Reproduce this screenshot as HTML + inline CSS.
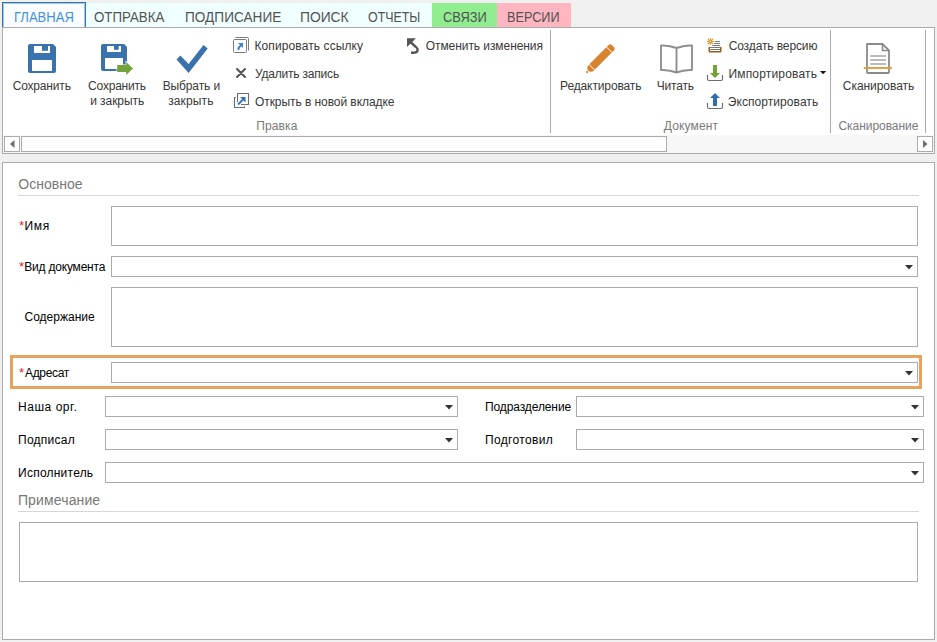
<!DOCTYPE html>
<html><head><meta charset="utf-8"><style>
html,body{margin:0;padding:0;width:937px;height:642px;overflow:hidden;background:#f0f0f0}
.a{position:absolute}
.t{position:absolute;white-space:nowrap;line-height:1;font-family:"Liberation Sans", sans-serif}
</style></head><body>
<div class="a" style="left:0px;top:0px;width:937px;height:642px;box-sizing:border-box;background:#f0f0f0"></div>
<div class="a" style="left:2px;top:3px;width:430px;height:24px;box-sizing:border-box;background:#f0ffff"></div>
<div class="a" style="left:432px;top:3px;width:65px;height:24px;box-sizing:border-box;background:#90ee90"></div>
<div class="a" style="left:497px;top:3px;width:74px;height:24px;box-sizing:border-box;background:#ffb6c1"></div>
<div class="a" style="left:2px;top:2px;width:84px;height:26px;box-sizing:border-box;background:#fafdff;border:1px solid #1e78c8;border-bottom:none;box-shadow:inset 1px 1px 0 #b8c4cc, inset -1px 0 0 #b8c4cc"></div>
<div class="a" style="left:2px;top:27px;width:933px;height:127px;box-sizing:border-box;background:#fff;border:1px solid #ababab"></div>
<div class="a" style="left:86px;top:27px;width:849px;height:1px;box-sizing:border-box;background:#a9abad"></div>
<div class="a" style="left:3px;top:135px;width:931px;height:18px;box-sizing:border-box;background:#f7f7f7"></div>
<div class="a" style="left:4px;top:136px;width:16px;height:16px;box-sizing:border-box;background:#fff;border:1px solid #ababab"></div>
<div class="a" style="left:21px;top:136px;width:646px;height:16px;box-sizing:border-box;background:#fff;border:1px solid #ababab"></div>
<div class="a" style="left:917px;top:136px;width:16px;height:16px;box-sizing:border-box;background:#fff;border:1px solid #ababab"></div>
<svg class="a" style="left:10px;top:140px" width="6" height="8"><path d="M4.5 0 L4.5 8 L0 4 Z" fill="#6e6e6e"/></svg>
<svg class="a" style="left:923px;top:140px" width="6" height="8"><path d="M0 0 L0 8 L4.5 4 Z" fill="#6e6e6e"/></svg>
<div class="a" style="left:550px;top:30px;width:1px;height:103px;box-sizing:border-box;background:#ababab"></div>
<div class="a" style="left:830px;top:30px;width:1px;height:103px;box-sizing:border-box;background:#ababab"></div>
<div class="a" style="left:925px;top:30px;width:1px;height:103px;box-sizing:border-box;background:#ababab"></div>
<div class="t" style="left:14.38px;top:10.15px;font-size:14px;color:#4592dc;letter-spacing:0.000px;transform:scaleX(0.9314);transform-origin:0 0;">ГЛАВНАЯ</div>
<div class="t" style="left:94.38px;top:10.15px;font-size:14px;color:#525252;letter-spacing:0.000px;transform:scaleX(0.9495);transform-origin:0 0;">ОТПРАВКА</div>
<div class="t" style="left:184.55px;top:10.15px;font-size:14px;color:#525252;letter-spacing:0.000px;transform:scaleX(0.9741);transform-origin:0 0;">ПОДПИСАНИЕ</div>
<div class="t" style="left:299.92px;top:10.15px;font-size:14px;color:#525252;letter-spacing:0.000px;transform:scaleX(0.9871);transform-origin:0 0;">ПОИСК</div>
<div class="t" style="left:368.45px;top:10.15px;font-size:14px;color:#525252;letter-spacing:0.000px;transform:scaleX(0.8844);transform-origin:0 0;">ОТЧЕТЫ</div>
<div class="t" style="left:442.65px;top:10.15px;font-size:14px;color:#525252;letter-spacing:0.000px;transform:scaleX(0.9175);transform-origin:0 0;">СВЯЗИ</div>
<div class="t" style="left:507.02px;top:10.15px;font-size:14px;color:#525252;letter-spacing:0.000px;transform:scaleX(0.9049);transform-origin:0 0;">ВЕРСИИ</div>
<div class="t" style="left:12.65px;top:79.84px;font-size:12px;color:#383838;letter-spacing:-0.173px;">Сохранить</div>
<div class="t" style="left:88.10px;top:79.84px;font-size:12px;color:#383838;letter-spacing:-0.207px;">Сохранить</div>
<div class="t" style="left:90.22px;top:94.84px;font-size:12px;color:#383838;letter-spacing:-0.073px;">и закрыть</div>
<div class="t" style="left:162.65px;top:79.84px;font-size:12px;color:#383838;letter-spacing:-0.115px;">Выбрать и</div>
<div class="t" style="left:168.16px;top:94.84px;font-size:12px;color:#383838;letter-spacing:0.129px;">закрыть</div>
<div class="t" style="left:560.05px;top:80.14px;font-size:12px;color:#383838;letter-spacing:-0.123px;">Редактировать</div>
<div class="t" style="left:656.74px;top:80.14px;font-size:12px;color:#383838;letter-spacing:-0.176px;">Читать</div>
<div class="t" style="left:842.86px;top:80.14px;font-size:12px;color:#383838;letter-spacing:-0.062px;">Сканировать</div>
<div class="t" style="left:254.48px;top:39.84px;font-size:12px;color:#383838;letter-spacing:0.102px;">Копировать ссылку</div>
<div class="t" style="left:254.93px;top:67.84px;font-size:12px;color:#383838;letter-spacing:-0.197px;">Удалить запись</div>
<div class="t" style="left:254.96px;top:95.84px;font-size:12px;color:#383838;letter-spacing:-0.065px;">Открыть в новой вкладке</div>
<div class="t" style="left:425.71px;top:39.84px;font-size:12px;color:#383838;letter-spacing:-0.067px;">Отменить изменения</div>
<div class="t" style="left:728.65px;top:40.04px;font-size:12px;color:#383838;letter-spacing:-0.111px;">Создать версию</div>
<div class="t" style="left:728.48px;top:67.84px;font-size:12px;color:#383838;letter-spacing:0.172px;">Импортировать</div>
<div class="t" style="left:727.80px;top:95.84px;font-size:12px;color:#383838;letter-spacing:0.065px;">Экспортировать</div>
<div class="t" style="left:256.32px;top:119.84px;font-size:12px;color:#7a7a7a;letter-spacing:0.095px;">Правка</div>
<div class="t" style="left:663.82px;top:119.84px;font-size:12px;color:#7a7a7a;letter-spacing:0.153px;">Документ</div>
<div class="t" style="left:838.49px;top:119.54px;font-size:12px;color:#7a7a7a;letter-spacing:-0.049px;">Сканирование</div>
<div class="a" style="left:2px;top:162px;width:933px;height:478px;box-sizing:border-box;background:#fff;border:1px solid #ababab"></div>
<div class="t" style="left:18.37px;top:177.15px;font-size:14px;color:#787878;letter-spacing:0.003px;">Основное</div>
<div class="a" style="left:18px;top:195px;width:901px;height:1px;box-sizing:border-box;background:#d6d6d6"></div>
<div class="t" style="left:17.92px;top:493.15px;font-size:14px;color:#787878;letter-spacing:0.135px;">Примечание</div>
<div class="a" style="left:18px;top:511px;width:901px;height:1px;box-sizing:border-box;background:#d6d6d6"></div>
<div class="t" style="left:19.00px;top:219.00px;font-size:13px;color:#e0202a;letter-spacing:0.000px;">*</div>
<div class="t" style="left:24.62px;top:219.84px;font-size:12px;color:#000;letter-spacing:0.589px;">Имя</div>
<div class="t" style="left:19.00px;top:260.00px;font-size:13px;color:#e0202a;letter-spacing:0.000px;">*</div>
<div class="t" style="left:24.31px;top:260.84px;font-size:12px;color:#000;letter-spacing:-0.209px;">Вид документа</div>
<div class="t" style="left:24.49px;top:310.84px;font-size:12px;color:#000;letter-spacing:0.007px;">Содержание</div>
<div class="t" style="left:19.00px;top:366.00px;font-size:13px;color:#e0202a;letter-spacing:0.000px;">*</div>
<div class="t" style="left:25.05px;top:366.84px;font-size:12px;color:#000;letter-spacing:-0.350px;">Адресат</div>
<div class="t" style="left:18.09px;top:400.84px;font-size:12px;color:#000;letter-spacing:0.524px;">Наша орг.</div>
<div class="t" style="left:18.11px;top:434.14px;font-size:12px;color:#000;letter-spacing:0.234px;">Подписал</div>
<div class="t" style="left:18.09px;top:466.64px;font-size:12px;color:#000;letter-spacing:0.229px;">Исполнитель</div>
<div class="t" style="left:485.05px;top:400.84px;font-size:12px;color:#000;letter-spacing:-0.112px;">Подразделение</div>
<div class="t" style="left:485.05px;top:433.84px;font-size:12px;color:#000;letter-spacing:0.332px;">Подготовил</div>
<div class="a" style="left:111px;top:206px;width:807px;height:40px;box-sizing:border-box;background:#fff;border:1px solid #ababab"></div>
<div class="a" style="left:111px;top:256px;width:807px;height:21px;box-sizing:border-box;background:#fff;border:1px solid #ababab"></div>
<svg class="a" style="left:905px;top:265px" width="8" height="5"><path d="M0 0 L8 0 L4 4.5 Z" fill="#333"/></svg>
<div class="a" style="left:111px;top:287px;width:807px;height:60px;box-sizing:border-box;background:#fff;border:1px solid #ababab"></div>
<div class="a" style="left:10px;top:355px;width:912px;height:34px;box-sizing:border-box;border:3px solid #e8a25e"></div>
<div class="a" style="left:111px;top:362px;width:807px;height:21px;box-sizing:border-box;background:#fff;border:1px solid #ababab"></div>
<svg class="a" style="left:905px;top:371px" width="8" height="5"><path d="M0 0 L8 0 L4 4.5 Z" fill="#333"/></svg>
<div class="a" style="left:105px;top:396px;width:353px;height:21px;box-sizing:border-box;background:#fff;border:1px solid #ababab"></div>
<svg class="a" style="left:445px;top:405px" width="8" height="5"><path d="M0 0 L8 0 L4 4.5 Z" fill="#333"/></svg>
<div class="a" style="left:576px;top:396px;width:348px;height:21px;box-sizing:border-box;background:#fff;border:1px solid #ababab"></div>
<svg class="a" style="left:911px;top:405px" width="8" height="5"><path d="M0 0 L8 0 L4 4.5 Z" fill="#333"/></svg>
<div class="a" style="left:105px;top:429px;width:353px;height:21px;box-sizing:border-box;background:#fff;border:1px solid #ababab"></div>
<svg class="a" style="left:445px;top:438px" width="8" height="5"><path d="M0 0 L8 0 L4 4.5 Z" fill="#333"/></svg>
<div class="a" style="left:576px;top:429px;width:348px;height:21px;box-sizing:border-box;background:#fff;border:1px solid #ababab"></div>
<svg class="a" style="left:911px;top:438px" width="8" height="5"><path d="M0 0 L8 0 L4 4.5 Z" fill="#333"/></svg>
<div class="a" style="left:105px;top:462px;width:819px;height:21px;box-sizing:border-box;background:#fff;border:1px solid #ababab"></div>
<svg class="a" style="left:911px;top:471px" width="8" height="5"><path d="M0 0 L8 0 L4 4.5 Z" fill="#333"/></svg>
<div class="a" style="left:19px;top:522px;width:899px;height:60px;box-sizing:border-box;background:#fff;border:1px solid #ababab"></div>
<svg class="a" style="left:28px;top:44px" width="28" height="29" viewBox="0 0 28 29">
<path d="M0 2 Q0 0 2 0 L25 0 L28 3 L28 27 Q28 29 26 29 L2 29 Q0 29 0 27 Z" fill="#3a72ae"/>
<path d="M6 2 L22 2 L22 9 L6 9 Z" fill="#fff"/>
<path d="M14 2 L20 2 L20 6.8 L14 6.8 Z" fill="#3a72ae"/>
<path d="M4 16 L24 16 L24 27 L4 27 Z" fill="#fff"/>
</svg>
<svg class="a" style="left:101px;top:44px" width="33" height="31" viewBox="0 0 33 31">
<path d="M0 2 Q0 0 2 0 L23 0 L26 3 L26 25 Q26 27 24 27 L2 27 Q0 27 0 25 Z" fill="#3a72ae"/>
<path d="M6 2 H20 V8 H6 Z" fill="#fff"/>
<path d="M13 2 H17.7 V5.8 H13 Z" fill="#3a72ae"/>
<path d="M4 14 H22 V25 H4 Z" fill="#fff"/>
<path d="M16.2 21 L25.2 21 L25.2 18 L32 24.5 L25.2 31 L25.2 28 L16.2 28 Z" fill="#73a43a" stroke="#fff" stroke-width="1.2" paint-order="stroke"/>
</svg>
<svg class="a" style="left:172px;top:40px" width="40" height="36" viewBox="0 0 40 36">
<path d="M4.5 19.4 L8.4 15.4 L16.6 23.9 L31.5 5.1 L35.7 8.4 L16.6 32.9 Z" fill="#3a72ae"/>
</svg>
<svg class="a" style="left:233px;top:37px" width="16" height="16" viewBox="0 0 16 16">
<path d="M2.5 0.5 L14.5 0.5 Q15.5 0.5 15.5 1.5 L15.5 13.5" fill="none" stroke="#7a7a7a" stroke-width="1"/>
<rect x="0.5" y="2.5" width="13" height="13" rx="1" fill="#fff" stroke="#7a7a7a" stroke-width="1"/>
<path d="M5 6 L10 6 L10 11 Z" fill="#3d85c6"/>
<path d="M8 8.5 Q4.8 10.5 5.6 13" fill="none" stroke="#3d85c6" stroke-width="2"/>
</svg>
<svg class="a" style="left:236px;top:68px" width="10" height="10" viewBox="0 0 10 10">
<path d="M1 1 L9 9 M9 1 L1 9" stroke="#505050" stroke-width="1.9" stroke-linecap="round"/>
</svg>
<svg class="a" style="left:233px;top:92px" width="17" height="17" viewBox="0 0 17 17">
<path d="M2.8 5.5 L1.5 5.5 L1.5 15.5 L11.5 15.5 L11.5 14.2" fill="none" stroke="#6a6e73" stroke-width="1.1"/>
<path d="M4.5 10 L4.5 1.5 L15.5 1.5 L15.5 12.5 L8 12.5" fill="none" stroke="#6a6e73" stroke-width="1.1"/>
<path d="M7 5 L12.5 5 L12.5 10.5 Z" fill="#2f73b8"/>
<path d="M11.5 6 L5 12.5" stroke="#2f73b8" stroke-width="1.8"/>
</svg>
<svg class="a" style="left:402px;top:35px" width="22" height="22" viewBox="0 0 22 22">
<path d="M5 3.2 L14 3.2 L5 12 Z" fill="#555"/>
<path d="M8.5 7 L14 12 Q17 15 14.5 17 Q13.5 17.8 9 17.8" fill="none" stroke="#555" stroke-width="2.4"/>
</svg>
<svg class="a" style="left:582px;top:40px" width="36" height="36" viewBox="0 0 36 36">
<g transform="translate(4.6,32.4) rotate(-45)">
<circle cx="0.6" cy="0" r="1.1" fill="#d8842f"/>
<path d="M2.2 0 Q3 -3.8 7 -3.8 L35 -3.8 Q37.2 -3.8 37.2 -1.6 L37.2 1.6 Q37.2 3.8 35 3.8 L7 3.8 Q3 3.8 2.2 0 Z" fill="#d8842f"/>
<path d="M7.4 -4 L7.4 4 M32 -4 L32 4" stroke="#fff" stroke-width="0.9"/>
</g>
</svg>
<svg class="a" style="left:660px;top:44px" width="34" height="30" viewBox="0 0 34 30">
<path d="M16.5 4 Q9 1 1 1.5 L1 26 Q9 25.5 16.5 28.5 Q24 25.5 32 26 L32 1.5 Q24 1 16.5 4 Z M16.5 4 L16.5 28.5" fill="none" stroke="#8f8f8f" stroke-width="1.9" stroke-linejoin="round"/>
</svg>
<svg class="a" style="left:704px;top:36px" width="22" height="20" viewBox="0 0 22 20">
<path d="M6.4 2 L6.4 9 M2.9 5.5 L9.9 5.5 M3.9 3 L8.9 8 M8.9 3 L3.9 8" stroke="#e09a28" stroke-width="1.1"/>
<circle cx="6.4" cy="5.5" r="1.6" fill="#e09a28"/><circle cx="6.4" cy="5.5" r="0.7" fill="#fff"/>
<path d="M11.2 5.5 L16 5.5 M10.2 7.5 L16 7.5 M8.2 9.5 L16 9.5 M6.2 11.5 L16 11.5 M6.2 13.5 L16 13.5" stroke="#666" stroke-width="0.9"/>
<path d="M5.2 11 L5.2 15 Q5.2 15.8 6 15.8 L16 15.8 Q16.8 15.8 16.8 15 L16.8 11" fill="none" stroke="#8e5b22" stroke-width="1.5"/>
</svg>
<svg class="a" style="left:704px;top:62px" width="22" height="22" viewBox="0 0 22 22">
<path d="M3.5 13 L3.5 17 Q3.5 18.5 5 18.5 L17 18.5 Q18.5 18.5 18.5 17 L18.5 13" fill="none" stroke="#6e6e6e" stroke-width="1.2"/>
<path d="M9 3 L13 3 L13 11 L16 11 L11 16 L6 11 L9 11 Z" fill="#72a532"/>
</svg>
<svg class="a" style="left:704px;top:90px" width="22" height="22" viewBox="0 0 22 22">
<path d="M3.5 13 L3.5 17 Q3.5 18.5 5 18.5 L17 18.5 Q18.5 18.5 18.5 17 L18.5 13" fill="none" stroke="#6e6e6e" stroke-width="1.2"/>
<path d="M11 3 L16 8 L13 8 L13 16 L9 16 L9 8 L6 8 Z" fill="#2f6fae"/>
</svg>
<svg class="a" style="left:820px;top:71px" width="7" height="4"><path d="M0 0 L6.2 0 L3.1 3.2 Z" fill="#111"/></svg>
<svg class="a" style="left:863px;top:43px" width="30" height="31" viewBox="0 0 30 31">
<path d="M4 1 L19.5 1 L26 7.5 L26 29 Q26 30 25 30 L5 30 Q4 30 4 29 Z" fill="#fff" stroke="#8a8a8a" stroke-width="1.8" stroke-linejoin="round"/>
<path d="M19.5 1 L19.5 7.5 L26 7.5" fill="none" stroke="#8a8a8a" stroke-width="1.6"/>
<path d="M7.2 13 L23.1 13 M7.2 17 L23.1 17 M7.2 21 L23.1 21" stroke="#bbb" stroke-width="1.8"/>
<path d="M0.8 25 L29 25" stroke="#e0a040" stroke-width="1.9"/>
</svg>
</body></html>
